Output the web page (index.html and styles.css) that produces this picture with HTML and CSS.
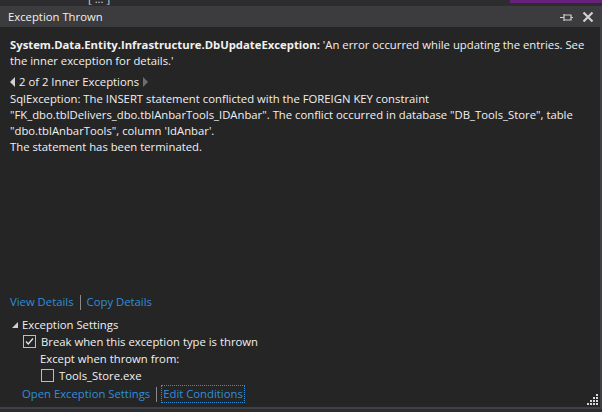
FILE: index.html
```html
<!DOCTYPE html>
<html>
<head>
<meta charset="utf-8">
<link rel="stylesheet" href="styles.css">
</head>
<body>
<div class="top">
  <span class="frag">[ ... ]</span>
  <div class="accent"></div>
</div>
<div class="panel">
  <div class="titlebar">
    <span class="title">Exception Thrown</span>
    <div class="tools">
      <svg class="pin" width="14" height="10" viewBox="0 0 14 10"><path d="M0 5.5h4M4 2v7M4 3h7v5H4M11 5.5h2" fill="none" stroke="#d0d0d0" stroke-width="1.2"/></svg>
      <svg class="close" width="12" height="12" viewBox="0 0 12 12"><path d="M1.5 1.5l9 9M10.5 1.5l-9 9" stroke="#d0d0d0" stroke-width="2.2"/></svg>
    </div>
  </div>
  <div class="body">
    <div class="content">
      <p class="msg"><span class="ln"><b>System.Data.Entity.Infrastructure.DbUpdateException:</b> 'An error occurred while updating the entries. See</span><br><span class="ln">the inner exception for details.'</span></p>
      <div class="nav"><span class="tri-l"></span><span>2 of 2 Inner Exceptions</span><span class="tri-r"></span></div>
      <p class="inner"><span class="ln">SqlException: The INSERT statement conflicted with the FOREIGN KEY constraint</span><br><span class="ln">"FK_dbo.tblDelivers_dbo.tblAnbarTools_IDAnbar". The conflict occurred in database "DB_Tools_Store", table</span><br><span class="ln">"dbo.tblAnbarTools", column 'IdAnbar'.</span><br><span class="ln">The statement has been terminated.</span></p>
    </div>
    <div class="links"><a>View Details</a><span class="sep"></span><a>Copy Details</a></div>
    <div class="settings">
      <div class="shead"><span class="tri-d"></span>Exception Settings</div>
      <div class="srow l1"><span class="cb checked"><svg width="11" height="11" viewBox="0 0 11 11"><path d="M2 5.5l2.3 2.5L9 2.5" fill="none" stroke="#e6e6e6" stroke-width="1.3"/></svg></span>Break when this exception type is thrown</div>
      <div class="srow l2">Except when thrown from:</div>
      <div class="srow l3"><span class="cb"></span>Tools_Store.exe</div>
      <div class="links l1b"><a>Open Exception Settings</a><span class="sep"></span><a class="focus">Edit Conditions</a></div>
    </div>
    <div class="grip">
      <svg width="12" height="12" viewBox="0 0 12 12" fill="#d8d8d8"><rect x="10" y="0" width="2" height="2"/><rect x="7" y="3" width="2" height="2"/><rect x="10" y="3" width="2" height="2"/><rect x="4" y="6" width="2" height="2"/><rect x="7" y="6" width="2" height="2"/><rect x="10" y="6" width="2" height="2"/><rect x="1" y="9" width="2" height="2"/><rect x="4" y="9" width="2" height="2"/><rect x="7" y="9" width="2" height="2"/><rect x="10" y="9" width="2" height="2"/></svg>
    </div>
  </div>
</div>
<div class="bottom"><span class="frag2">none</span></div>
</body>
</html>
```
FILE: styles.css
```css
html, body { margin: 0; padding: 0; }
body {
  width: 602px;
  height: 412px;
  overflow: hidden;
  background: #2d2d30;
  font-family: "Segoe UI", "Open Sans", "Noto Sans", sans-serif;
  font-size: 11.3px;
  color: #f1f1f1;
}
.top {
  height: 6px;
  position: relative;
  background: #2d2d30;
  overflow: hidden;
}
.frag {
  position: absolute;
  left: 88px;
  top: -9px;
  color: #d0d0d0;
}
.accent {
  position: absolute;
  right: 0;
  top: 0;
  width: 92px;
  height: 3px;
  background: #68217a;
}
.panel {
  width: 600px;
  border-right: 2px solid #3f3f46;
  height: 403px;
  display: flex;
  flex-direction: column;
}
.titlebar {
  height: 21px;
  background: #3c3c3f;
  display: flex;
  align-items: center;
  justify-content: space-between;
  padding: 0 6px 0 8px;
}
.title { color: #f1f1f1; }
.tools { display: flex; align-items: center; gap: 8px; }
.body {
  flex: 1;
  background: #252526;
  position: relative;
  display: flex;
  flex-direction: column;
  padding: 0 10px;
  border-bottom: 2px solid #3f3f46;
}
.content { flex: 1; }
p { margin: 0; }
.ln { white-space: nowrap; }
.msg { margin-top: 10px; line-height: 16px; }
.msg b { font-weight: 700; }
.nav { margin-top: 5px; line-height: 16px; display: flex; align-items: center; }
.tri-l, .tri-r {
  width: 0; height: 0;
  border-top: 5px solid transparent;
  border-bottom: 5px solid transparent;
}
.tri-l { border-right: 5px solid #d0d0d0; margin-right: 4px; }
.tri-r { border-left: 5px solid #6e6e70; margin-left: 4px; }
.inner { line-height: 16px; margin-top: 1px; }
a { color: #2f8fd8; text-decoration: none; }
.links { display: flex; align-items: center; line-height: 16px; }
.sep { width: 1px; height: 15px; background: #8a8a8a; margin: 0 6px 0 6px; }
.settings { margin-top: 6px; margin-bottom: 5px; }
.shead { display: flex; align-items: center; line-height: 17px; padding-left: 2px; }
.tri-d {
  width: 0; height: 0;
  border-left: 6px solid transparent;
  border-bottom: 6px solid #d0d0d0;
  margin-right: 4px;
  margin-top: 1px;
}
.srow { display: flex; align-items: center; line-height: 17px; }
.l1 { padding-left: 13px; }
.l2 { padding-left: 30px; }
.l3 { padding-left: 31px; }
.cb {
  width: 11px; height: 11px;
  border: 1px solid #bdbdbd;
  margin-right: 5px;
  position: relative;
  flex: none;
}
.cb svg { position: absolute; left: 0; top: 0; }
.l1b { padding-left: 12px; margin-top: 2px; }
.focus { outline: 1px dotted #2f8fd8; padding: 0 1px; margin-left: -1px; }
.grip { position: absolute; right: 2px; bottom: 1px; line-height: 0; }
.bottom { height: 7px; position: relative; overflow: hidden; background: #2d2d30; }
.frag2 { position: absolute; left: 224px; top: 1px; color: #d0d0d0; font-size: 11px; }
```
